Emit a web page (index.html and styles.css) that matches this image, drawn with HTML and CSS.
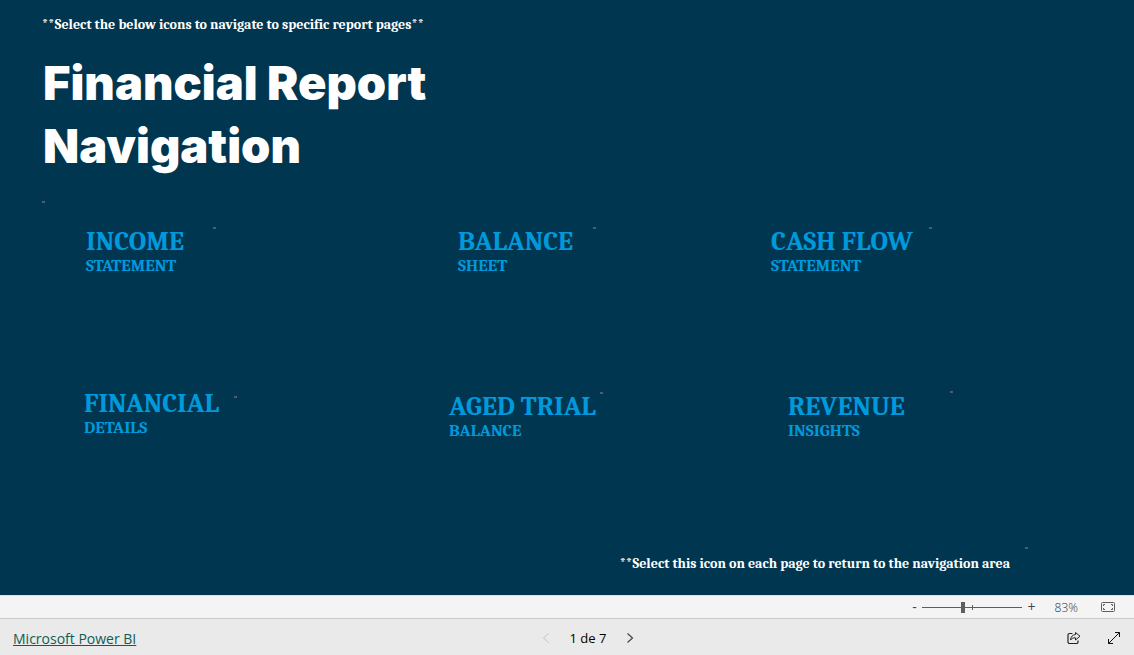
FILE: index.html
```html
<!DOCTYPE html>
<html lang="en">
<head>
<meta charset="utf-8">
<title>Financial Report Navigation</title>
<link rel="stylesheet" href="styles.css">
</head>
<body>
<main class="report">
  <p class="note">**Select the below icons to navigate to specific report pages**</p>
  <h1 class="title">Financial Report<br>Navigation</h1>
  <i class="dot dot-title"></i>
  <nav class="tiles tiles-first" aria-label="Statements">
    <a class="tile" href="#income"><span class="name">INCOME</span><span class="kind">STATEMENT</span><i class="dot dot-income"></i></a>
    <a class="tile" href="#balance"><span class="name">BALANCE</span><span class="kind">SHEET</span><i class="dot dot-balance"></i></a>
    <a class="tile" href="#cash"><span class="name">CASH FLOW</span><span class="kind">STATEMENT</span><i class="dot dot-cash"></i></a>
  </nav>
  <nav class="tiles tiles-second" aria-label="Details">
    <a class="tile tile-raised" href="#details"><span class="name">FINANCIAL</span><span class="kind">DETAILS</span><i class="dot dot-details"></i></a>
    <a class="tile" href="#trial"><span class="name">AGED TRIAL</span><span class="kind">BALANCE</span><i class="dot dot-trial"></i></a>
    <a class="tile" href="#revenue"><span class="name">REVENUE</span><span class="kind">INSIGHTS</span><i class="dot dot-revenue"></i></a>
  </nav>
  <p class="note note-return">**Select this icon on each page to return to the navigation area<i class="dot dot-return"></i></p>
</main>
<div class="zoombar">
  <button class="zoom-step" type="button" aria-label="Zoom out">-</button>
  <div class="slider"><input class="range" type="range" min="0" max="100" value="41" aria-label="Zoom"></div>
  <button class="zoom-step" type="button" aria-label="Zoom in">+</button>
  <span class="percent">83%</span>
  <button class="icon-button" type="button" aria-label="Fit to page">
    <svg width="14" height="10" viewBox="0 0 14 10" fill="none" stroke="#605e5c"><rect x=".5" y=".5" width="13" height="9" rx="1"/><path d="M2.500 4V2.500H4M10 2.500h1.500V4M11.500 6v1.500H10M4 7.500H2.500V6"/></svg>
  </button>
</div>
<footer class="footer">
  <div class="footer-side"><a class="brand" href="#powerbi">Microsoft Power BI</a></div>
  <div class="pager">
    <button class="icon-button" type="button" aria-label="Previous page" disabled><svg width="8" height="12" viewBox="0 0 8 12" fill="none" stroke="#c2c2c2"><path d="M6.500 1.500L1.500 6l5 4.500"/></svg></button>
    <span class="page">1 de 7</span>
    <button class="icon-button" type="button" aria-label="Next page"><svg width="8" height="12" viewBox="0 0 8 12" fill="none" stroke="#444" stroke-width="1.200"><path d="M1.500 1.500L6.500 6l-5 4.500"/></svg></button>
  </div>
  <div class="footer-side footer-actions">
    <button class="icon-button" type="button" aria-label="Share"><svg width="14" height="14" viewBox="0 0 14 14" fill="none" stroke="#222" stroke-linejoin="round"><path d="M5.500 2.500h-3a1.500 1.500 0 0 0-1.500 1.500v7a1.500 1.500 0 0 0 1.500 1.500h7a1.500 1.500 0 0 0 1.500-1.500v-1.500" stroke-width="1.200"/><path d="M8.500 1.500L13 5.200 8.500 9V6.800C6.200 6.700 4.800 7.300 3.500 9 3.800 5.700 5.600 3.800 8.500 3.600z"/></svg></button>
    <button class="icon-button" type="button" aria-label="Full screen"><svg width="14" height="14" viewBox="0 0 14 14" fill="none" stroke="#111"><path d="M8 1.500h4.500V6M12.500 1.500l-11 11M1.500 8v4.500H6"/></svg></button>
  </div>
</footer>
</body>
</html>
```
FILE: styles.css
```css
* { box-sizing: border-box; }
body {
  margin: 0;
  min-height: 100vh;
  display: flex;
  flex-direction: column;
  font-family: "Open Sans", sans-serif;
}
.report {
  flex: 1;
  display: flex;
  flex-direction: column;
  background: #00364f;
  color: #fff;
  font-family: Cambria, Caladea, "Noto Serif", "Liberation Serif", serif;
}
.note {
  position: relative;
  margin: 16px 0 0 42px;
  font-size: 14px;
  line-height: 18px;
  font-weight: 700;
}
.title {
  margin: 17px 0 0 43px;
  font-family: "Arial Black", Inter, sans-serif;
  font-size: 47px;
  line-height: 63px;
  font-weight: 900;
}
.dot {
  position: absolute;
  width: 3px;
  height: 2px;
  background: #4d5d68;
}
.dot-title { position: static; margin: 24px 0 0 42px; }
.tiles { display: grid; }
.tiles-first {
  grid-template-columns: 372fr 313fr 363fr;
  margin: 25px 0 0 86px;
}
.tiles-second {
  grid-template-columns: 365fr 339fr 346fr;
  margin: 117px 0 0 84px;
}
.tile {
  position: relative;
  justify-self: start;
  display: flex;
  flex-direction: column;
  color: #0099dc;
  font-weight: 700;
  text-decoration: none;
}
.tile-raised { margin: -3px 0 3px; }
.name { font-size: 27px; line-height: 28px; }
.kind { font-size: 17px; line-height: 20px; }
.dot-income { left: 127px; top: -1px; }
.dot-balance { left: 135px; top: -1px; }
.dot-cash { left: 158px; top: -1px; }
.dot-details { left: 150px; top: 6px; }
.dot-trial { left: 151px; top: -1px; }
.dot-revenue { left: 162px; top: -2px; }
.note-return { align-self: flex-end; margin: auto 124px 22px 0; }
.dot-return { right: -18px; top: -8px; }
.zoombar {
  display: flex;
  align-items: center;
  justify-content: flex-end;
  height: 23px;
  padding-right: 19px;
  background: #f4f4f4;
  border-top: 1px solid #e1e1e1;
  color: #605e5c;
}
button {
  padding: 0;
  border: 0;
  background: none;
  color: inherit;
  font: inherit;
}
.zoom-step { width: 10px; font-size: 14px; line-height: 20px; color: #444; }
.slider { position: relative; display: flex; width: 100px; margin: 0 5px 0 2px; }
.slider::after {
  content: "";
  position: absolute;
  left: 50px;
  top: 3px;
  width: 1px;
  height: 5px;
  background: #605e5c;
}
.range {
  appearance: none;
  width: 100%;
  height: 11px;
  margin: 0;
  background: linear-gradient(#605e5c, #605e5c) center / 100% 1px no-repeat;
}
.range::-webkit-slider-thumb {
  appearance: none;
  width: 4px;
  height: 11px;
  background: #605e5c;
}
.percent { margin: 0 23px 0 18px; font-size: 12px; font-weight: 300; color: #333; }
.icon-button { display: flex; }
.footer {
  display: grid;
  grid-template-columns: 1fr auto 1fr;
  align-items: center;
  height: 37px;
  padding: 2px 13px 0;
  background: #eaeaea;
  border-top: 1px solid #c8c8c8;
}
.brand { color: #0f5c56; font-size: 14px; line-height: 20px; }
.pager { display: flex; align-items: center; gap: 20px; margin-left: 42px; }
.page { font-size: 13px; font-weight: 500; color: #000; }
.footer-actions { display: flex; justify-content: flex-end; gap: 26px; }
```
